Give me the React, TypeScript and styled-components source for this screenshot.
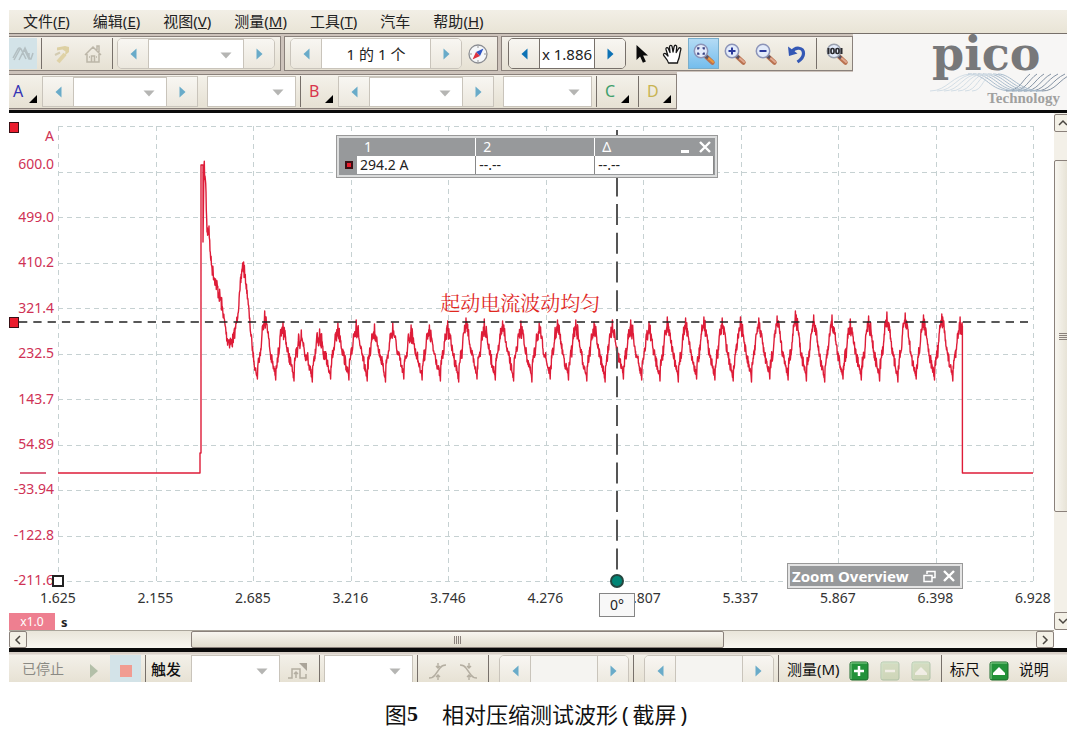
import React from "react";
import styled, { createGlobalStyle, css } from "styled-components";

const UI_FONT = `"Noto Sans", "Noto Sans CJK SC", sans-serif`;
const LINE = "#8a817b";

const GlobalStyle = createGlobalStyle`
  *, *::before, *::after { box-sizing: border-box; }
  body { margin: 0; background: #fff; font-family: ${UI_FONT}; color: #222; }
  button, input, select { font: inherit; color: inherit; }
`;

/* ---------- page ---------- */

const Page = styled.figure`
  margin: 0;
  padding: 10px 13px 0 9px;
`;

const Frame = styled.div`
  overflow: hidden;
`;

const Caption = styled.figcaption`
  display: flex;
  justify-content: center;
  padding: 16px 0 0 0;
  font-size: 22px;
  line-height: 32px;
  color: #111;
`;

const CaptionNumber = styled.b`
  font-family: "Liberation Serif", serif;
  margin-right: 24px;
`;

const Paren = styled.span`
  padding: 0 4px;
`;

/* ---------- menu ---------- */

const MenuBar = styled.nav`
  display: flex;
  gap: 23px;
  height: 24px;
  padding-left: 14px;
  background: linear-gradient(#f2efe6, #e9e4d6);
  border-bottom: 1px solid #77706a;
`;

const MenuItem = styled.button`
  border: 0;
  padding: 0 0 2px;
  background: none;
  font-size: 15px;
  line-height: 20px;
  white-space: nowrap;
`;

/* ---------- toolbars ---------- */

const Header = styled.header`
  display: flex;
  justify-content: space-between;
  background: #f7f6f5;
  border-bottom: 3px solid #0a0a0a;
`;

const Bars = styled.div`
  flex: none;
  display: flex;
  flex-direction: column;
  align-items: flex-start;
`;

const BarRow = styled.div`
  display: flex;
  gap: 3px;
  padding: 2px 0 1px;
  background: #cdc3bb;
`;

const Group = styled.div<{ $left?: number; $right?: number }>`
  display: flex;
  align-items: center;
  height: 35px;
  padding: 0 ${(p) => p.$right ?? 0}px 0 ${(p) => p.$left ?? 0}px;
  border: 1px solid ${LINE};
  background: linear-gradient(#f4f1ea, #e6e1d3);
  &:first-child { border-left: 0; }
`;

const Sep = styled.span`
  flex: none;
  width: 1px;
  height: 31px;
  margin: 0 4px;
  background: #77706a;
`;

const TOOL_WIDTH = { narrow: 28, normal: 31, wide: 35 };

const Tool = styled.button<{ $size?: keyof typeof TOOL_WIDTH; $tone?: "pale" | "active" }>`
  flex: none;
  display: flex;
  align-items: center;
  justify-content: center;
  width: ${(p) => TOOL_WIDTH[p.$size ?? "normal"]}px;
  height: 31px;
  padding: 0;
  border: 1px solid transparent;
  background: none;
  ${(p) => p.$tone === "pale" && css`background: #d3e3e8;`}
  ${(p) =>
    p.$tone === "active" &&
    css`background: linear-gradient(#b4dbf5, #74bdec); border-color: #7aaecb;`}
`;

const Channel = styled.button<{ $color: string }>`
  flex: none;
  display: flex;
  align-items: flex-end;
  justify-content: space-between;
  width: 33px;
  height: 33px;
  padding: 0 5px 5px 4px;
  border: 0;
  background: none;
  color: ${(p) => p.$color};
  font-size: 16px;
  line-height: 24px;
  svg { display: block; }
`;

const Stepper = styled.div<{ $dark?: boolean; $flat?: boolean; $indent?: boolean }>`
  flex: none;
  display: flex;
  height: 31px;
  margin-left: ${(p) => (p.$indent ? 6 : 0)}px;
  border: 1px solid ${(p) => (p.$dark ? "#77706a" : "#c9c4bb")};
  border-radius: ${(p) => (p.$flat ? 0 : 5)}px;
  overflow: hidden;
`;

const StepButton = styled.button`
  display: flex;
  align-items: center;
  justify-content: center;
  width: 30px;
  padding: 0;
  border: 0;
  background: linear-gradient(#f8f6f2, #ece8de);
`;

const Field = styled.input<{ $w: number; $dark?: boolean; $dim?: boolean }>`
  width: ${(p) => p.$w}px;
  padding: 0;
  border: solid ${(p) => (p.$dark ? "#77706a" : "#c9c4bb")};
  border-width: 0 1px;
  background: ${(p) => (p.$dim ? "#f5f4f1" : "#fff")};
  font-size: 15px;
  text-align: center;
`;

const DropBox = styled.span<{ $w: number; $gap?: boolean }>`
  flex: none;
  position: relative;
  display: block;
  width: ${(p) => p.$w}px;
  height: 31px;
  margin-left: ${(p) => (p.$gap ? 9 : 0)}px;
  svg {
    position: absolute;
    right: 12px;
    top: 13px;
    pointer-events: none;
  }
`;

const DropSelect = styled.select`
  appearance: none;
  width: 100%;
  height: 100%;
  border: 1px solid #c9c4bb;
  border-radius: 0;
  background: #fff;
`;

/* ---------- logo ---------- */

const Logo = styled.div`
  position: relative;
  width: 137px;
  height: 76px;
  color: #77787a;
`;

const LogoName = styled.div`
  font-family: "DejaVu Serif", serif;
  font-weight: 700;
  font-size: 46px;
  line-height: 40px;
  height: 40px;
  padding-left: 2px;
  white-space: nowrap;
`;

const LogoWave = styled.svg`
  display: block;
  position: absolute;
  left: 0;
  top: 39px;
`;

const LogoSub = styled.div`
  position: absolute;
  right: 7px;
  bottom: 3px;
  font-family: "Liberation Serif", serif;
  font-weight: 700;
  font-size: 15px;
  line-height: 18px;
  color: #a0a09f;
`;

/* ---------- scope view ---------- */

const Scope = styled.main`
  position: relative;
  display: grid;
  grid-template-columns: minmax(0, 1fr) 13px;
  background: #fff;
`;

const PlotGrid = styled.div`
  display: grid;
  grid-template-columns: 49px minmax(0, 1fr) 21px;
  padding-top: 13px;
  font-size: 14px;
  line-height: 20px;
`;

const YAxis = styled.div`
  display: flex;
  flex-direction: column;
  height: 464px;
  padding-right: 4px;
  text-align: right;
  color: #cf3155;
`;

const YTop = styled.div`
  display: flex;
  flex-direction: column;
  gap: 8px;
  height: 81px;
`;

const YScale = styled.div`
  flex: 1;
  display: flex;
  flex-direction: column;
  align-items: flex-end;
  justify-content: space-between;
`;

const PlotCell = styled.div`
  position: relative;
  height: 455px;
`;

const PlotSvg = styled.svg`
  display: block;
  width: 100%;
  height: 455px;
  overflow: visible;
`;

const XAxis = styled.div`
  grid-column: 2;
  display: flex;
  justify-content: space-between;
  margin: -2px -20px 5px;
  color: #333;
  span { width: 40px; text-align: center; }
`;

const UnitRow = styled.div`
  grid-column: 1 / -1;
  display: flex;
  align-items: center;
  gap: 6px;
  height: 17px;
  font-size: 13px;
`;

const ScaleTag = styled.span`
  width: 46px;
  height: 17px;
  line-height: 17px;
  font-size: 12px;
  text-align: center;
  color: #fff;
  background: #ee7f90;
`;

const Marker = styled.button<{ $y: number }>`
  position: absolute;
  left: 0;
  top: ${(p) => p.$y}px;
  width: 10px;
  height: 11px;
  padding: 0;
  border: 1px solid #3a1015;
  background: #ea1c2d;
`;

const AxisHandle = styled.button`
  position: absolute;
  left: -6px;
  bottom: -6px;
  width: 12px;
  height: 12px;
  padding: 0;
  border: 2px solid #222;
  background: #fff;
`;

const PhaseHandle = styled.button`
  position: absolute;
  left: 57.33%;
  bottom: -7px;
  width: 14px;
  height: 14px;
  margin-left: -7px;
  padding: 0;
  border: 2px solid #24463f;
  border-radius: 50%;
  background: #008575;
`;

const OverlayCell = styled.div`
  position: absolute;
  left: 49px;
  right: 34px;
  top: 13px;
`;

const PhaseLabel = styled.output`
  position: absolute;
  left: 57.33%;
  top: 467px;
  width: 36px;
  height: 24px;
  margin-left: -18px;
  border: 1px solid #858585;
  background: #f8f8f8;
  font-size: 14px;
  line-height: 22px;
  text-align: center;
`;

const Note = styled.p`
  position: absolute;
  left: 39.2%;
  top: 164px;
  margin: 0;
  font-family: "Noto Serif CJK SC", "Noto Sans CJK SC", serif;
  font-size: 20px;
  line-height: 26px;
  white-space: nowrap;
  color: #e0281f;
`;

const RulerPanel = styled.section`
  position: absolute;
  left: 278px;
  top: 9px;
  width: 382px;
  padding: 2px;
  border: 1px solid #999;
  background: #dcdddd;
`;

const RulerInner = styled.div`
  position: relative;
  padding: 0 1px 1px 0;
  background: #97999b;
`;

const RulerTable = styled.table`
  width: 100%;
  table-layout: fixed;
  border-collapse: collapse;
  font-size: 14px;
  line-height: 18px;
  text-align: left;
  th, td { padding: 0 0 0 3px; height: 18px; }
  tr > :first-child { width: 18px; padding: 0 0 0 6px; }
  th { font-weight: 400; color: #fff; border-right: 1px solid #fff; padding-left: 7px; }
  th:first-child, th:last-child { border-right: 0; }
  td { background: #fff; color: #222; border-right: 1px solid #888; }
  td:first-child { background: #97999b; border-right: 0; }
`;

const Swatch = styled.span`
  display: block;
  width: 8px;
  height: 8px;
  border: 2px solid #3a1015;
  background: #ea1c2d;
`;

const PanelButtons = styled.div<{ $inline?: boolean }>`
  display: flex;
  gap: 4px;
  ${(p) => !p.$inline && css`position: absolute; right: 2px; top: 1px;`}
`;

const PanelButton = styled.button`
  display: flex;
  align-items: center;
  justify-content: center;
  width: 16px;
  height: 16px;
  padding: 0;
  border: 0;
  background: none;
`;

const Overview = styled.section`
  position: absolute;
  right: 70px;
  bottom: -8px;
  width: 176px;
  padding: 2px;
  border: 1px solid #999;
  background: #e4e4e4;
`;

const OverviewBar = styled.div`
  display: flex;
  align-items: center;
  justify-content: space-between;
  padding: 0 3px 0 2px;
  background: #97999b;
  color: #fff;
  font-size: 15px;
  line-height: 20px;
  font-weight: 700;
`;

/* ---------- scroll bars ---------- */

const VBar = styled.div`
  display: flex;
  flex-direction: column;
  overflow: hidden;
  padding-top: 1px;
  background: #f3f0e8;
`;

const HBar = styled.div`
  display: flex;
  height: 18px;
  margin-right: 13px;
  border-top: 1px solid #aaa59b;
  background: linear-gradient(#e9e5da, #f8f6f0);
`;

const ScrollButton = styled.button`
  flex: none;
  display: flex;
  align-items: center;
  justify-content: center;
  width: 18px;
  height: 18px;
  padding: 0;
  border: 1px solid ${LINE};
  border-radius: 2px;
  background: #f3f0e6;
  ${HBar} & { height: 17px; }
`;

const Track = styled.div<{ $grow: number }>`
  flex: ${(p) => p.$grow} 1 0;
`;

const Thumb = styled.div<{ $grow: number; $vertical?: boolean }>`
  flex: ${(p) => p.$grow} 1 0;
  display: flex;
  align-items: center;
  justify-content: center;
  width: ${(p) => (p.$vertical ? "18px" : "auto")};
  border: 1px solid ${LINE};
  border-radius: 2px;
  background: linear-gradient(${(p) => (p.$vertical ? "90deg, " : "")}#f8f6f0, #e2ddce);
`;

/* ---------- status bar ---------- */

const StatusBar = styled.footer`
  display: flex;
  align-items: flex-start;
  height: 34px;
  padding-top: 3px;
  overflow: hidden;
  border-top: 4px solid #0a0a0a;
  background: linear-gradient(#d8d0c8 0, #d8d0c8 2px, #f3f0e9 3px, #e7e2d4 100%);
`;

const Status = styled.span`
  flex: none;
  padding: 0 15px 0 13px;
  font-size: 14px;
  line-height: 28px;
  color: #8b8a84;
`;

const BarLabel = styled.span<{ $trigger?: boolean }>`
  flex: none;
  padding: 0 ${(p) => (p.$trigger ? 10 : 4)}px 0 ${(p) => (p.$trigger ? 1 : 4)}px;
  font-size: 15px;
  line-height: 28px;
  font-weight: ${(p) => (p.$trigger ? 500 : 400)};
  color: #111;
`;

/* ---------- icons ---------- */

const Triangle = ({ dir, strong }: { dir: "l" | "r"; strong?: boolean }) => (
  <svg width="7" height="12" viewBox="0 0 7 12" fill={strong ? "#0d72b5" : "#69abc9"}>
    <path d={dir === "l" ? "M6.5 0.5v11L0.5 6z" : "M0.5 0.5v11L6.5 6z"} />
  </svg>
);

const DropArrow = () => (
  <svg width="12" height="7" viewBox="0 0 12 7" fill="#b5b5b3">
    <path d="M0.5 0.5h11L6 6.5z" />
  </svg>
);

const Corner = () => (
  <svg width="8" height="8" viewBox="0 0 8 8"><path d="M8 0v8H0z" fill="#000" /></svg>
);

const WaveIcon = () => (
  <svg width="22" height="20" viewBox="0 0 22 20" fill="none" stroke="#b3bfc2" strokeWidth="1.5">
    <path d="M1 14L6 5q1.500-2 3 0l5 10M2 16L8 5M7 16L13 4l5 11M12 5l5 10h2l2-6M17 9v6" />
  </svg>
);

const WandIcon = () => (
  <svg width="20" height="22" viewBox="0 0 20 22" fill="none">
    <path d="M6 19l7-8" stroke="#dfd2a6" strokeWidth="4" />
    <path d="M5 4.500l8-1.500 4 1v5l-4 3.500 0.500-4-3-2-5.500 1z" fill="#ddd0a2" />
    <path d="M3 12l5-2.500" stroke="#d3cbb2" strokeWidth="2" />
  </svg>
);

const HomeIcon = () => (
  <svg width="20" height="20" viewBox="0 0 20 20" fill="none" stroke="#bcb6a8" strokeWidth="1.5">
    <path d="M2 11l8-8 8 8M4 10v8h12v-8M14 6V2h2v6M8.5 18v-6h3v6M6 13h1M13 13h1" />
  </svg>
);

const CompassIcon = () => (
  <svg width="22" height="22" viewBox="0 0 22 22">
    <circle cx="11" cy="11" r="9" fill="#f5f7f9" stroke="#8b8d92" strokeWidth="1.3" />
    <path d="M11 3v2M11 17v2M3 11h2M17 11h2" stroke="#999" />
    <path d="M16.5 5.5L13 13 9 9z" fill="#2e55c4" />
    <path d="M5.5 16.5L9 9l4 4z" fill="#dc3340" />
  </svg>
);

const PointerIcon = () => (
  <svg width="14" height="20" viewBox="0 0 14 20">
    <path d="M1.5 1v15l3.6-3.4 2.8 6.2 3-1.4-2.8-6H13z" fill="#0b0b0b" />
  </svg>
);

const HandIcon = () => (
  <svg width="22" height="22" viewBox="0 0 22 22" fill="#fff" stroke="#161616" strokeWidth="1.300" strokeLinejoin="round">
    <path d="M6.500 20C6 17 2 13.500 1.500 12c-.4-1.500 1.500-2 2.500-1l2 2L4 6.500c-.5-2 1.700-2.500 2.400-.8L8 9.500 7.500 4c0-2 2.300-2.200 2.600-.3L11 9l1.200-5.600c.5-1.800 2.700-1.300 2.500.5L14.200 9.500l2.400-4c.9-1.500 2.800-.5 2.200 1.100-1 3-1 5.400-1.800 8.400-.5 2-1.500 3-1.500 5z" />
  </svg>
);

const Magnifier = ({ kind }: { kind: "box" | "plus" | "minus" | "full" }) => (
  <svg width="24" height="24" viewBox="0 0 24 24" fill="none">
    <path d="M14 14.500l6.500 6" stroke="#b9714f" strokeWidth="4.500" strokeLinecap="round" />
    <path d="M13 13.500l3 2.500" stroke="#5a5362" strokeWidth="3" />
    <path d="M17 16.500l4 3.500" stroke={kind === "box" ? "#ec9a3c" : "#dfa78e"} strokeWidth="2" strokeLinecap="round" />
    <circle cx="9" cy="9" r="6.700" fill="#e3ebfa" stroke={kind === "full" ? "#9aa0ad" : "#8c94b8"} strokeWidth="1.500" />
    {kind === "box" && <path d="M6 7.500V6h1.500M10.500 6H12v1.500M12 10.500V12h-1.500M7.500 12H6v-1.500" stroke="#333d80" strokeWidth="1.700" />}
    {kind === "plus" && <path d="M9 5.500v7M5.500 9h7" stroke="#2b3a9c" strokeWidth="2" />}
    {kind === "minus" && <path d="M5.500 9h7" stroke="#2b3a9c" strokeWidth="2" />}
    {kind === "full" && (
      <>
        <path d="M3.500 6v6M16.500 6v6" stroke="#2a2a2e" strokeWidth="2" />
        <rect x="6" y="6.500" width="3" height="5" rx="1.200" stroke="#2a2a2e" strokeWidth="1.700" />
        <rect x="11" y="6.500" width="3" height="5" rx="1.200" stroke="#2a2a2e" strokeWidth="1.700" />
      </>
    )}
  </svg>
);

const UndoIcon = () => (
  <svg width="20" height="20" viewBox="0 0 20 20" fill="none">
    <path d="M5 8C8 2.500 16.500 3 16.500 9.500c0 4-3 6.500-6 8.500" stroke="#3458b5" strokeWidth="3.200" />
    <path d="M1 2.500l1 9.500 8.500-2.500z" fill="#3458b5" />
  </svg>
);

const PulseIcon = () => (
  <svg width="22" height="20" viewBox="0 0 22 20" fill="none" stroke="#b4aea1" strokeWidth="1.500">
    <path d="M1 17h4V8h8v9h6v-4M9 11v6M7 13l2-2 2 2" />
    <path d="M12 2h8v8z" fill="#aaa499" stroke="none" />
  </svg>
);

const EdgeIcon = ({ falling }: { falling?: boolean }) => (
  <svg width="20" height="20" viewBox="0 0 20 20" fill="none" stroke="#b4aea1" strokeWidth="1.400">
    <path d={falling ? "M1 4q4 0 6 3l5 7q2 3 6 3" : "M1 17q4 0 6-3l5-7q2-3 6-3"} />
    <path d="M10 2v5M10 14v5M8 5l2 2 2-2M8 16l2-2 2 2" />
  </svg>
);

const GreenIcon = ({ kind, faded }: { kind: "plus" | "minus" | "up"; faded?: boolean }) => (
  <svg width="20" height="20" viewBox="0 0 20 20" opacity={faded ? 0.28 : 1}>
    <rect x="1" y="1" width="18" height="18" rx="2" fill={faded ? "#8fb56f" : "#23923a"} stroke="#1b6b2b" />
    <path d="M2 18V2h16" fill="none" stroke="#8bd08f" />
    {kind === "plus" && <path d="M10 5v10M5 10h10" stroke="#fff" strokeWidth="2.500" />}
    {kind === "minus" && <path d="M5 10h10" stroke="#fff" strokeWidth="2.500" />}
    {kind === "up" && <path d="M4 12l6-6 6 6v2H4z" fill="#fff" />}
  </svg>
);

const Chevron = ({ d }: { d: string }) => (
  <svg width="10" height="10" viewBox="0 0 10 10" fill="none" stroke="#4a4640" strokeWidth="1.500">
    <path d={d} />
  </svg>
);

const CloseIcon = () => (
  <svg width="12" height="12" viewBox="0 0 12 12" stroke="#fff" strokeWidth="2.400"><path d="M1 1l10 10M11 1L1 11" /></svg>
);

/* ---------- waveform data ---------- */

const PLOT_W = 975;
const PLOT_H = 455;
const RIPPLE_START = 207;
const RIPPLE_PITCH = 18.3;
const RIPPLE_TOPS = [
  185, 196, 204, 203, 197, 194, 198, 197, 199, 199, 195, 192, 193, 195, 195, 197, 194, 194, 196, 194,
  194, 196, 191, 192, 191, 192, 191, 192, 190, 185, 189, 189, 193, 190, 186, 187, 189, 188, 191,
];

type Pt = [number, number, number];

function buildTrace(): string {
  // Each key point carries x, y and the noise amplitude towards it.
  const keys: Pt[] = [
    [0, 347, 0], [142, 347, 0], [142, 327, 0], [143, 327, 0], [143, 39, 0], [145, 39, 0], [145, 116, 0],
    [146, 40, 0], [147, 50, 8], [148, 66, 6], [149, 106, 10], [151, 100, 10], [152, 125, 5], [154, 142, 5],
    [158, 157, 7], [161, 168, 8], [164, 180, 8], [167, 199, 5], [169, 213, 5], [171, 214, 8], [173, 217, 8],
    [175, 214, 8], [177, 205, 6], [180, 187, 4], [182, 164, 4], [184, 143, 7], [185, 137, 4], [187, 150, 9],
    [190, 174, 4], [192, 199, 4], [194, 219, 5], [196, 235, 4], [198, 246, 5],
  ];
  RIPPLE_TOPS.forEach((top, i) => {
    const x = RIPPLE_START + i * RIPPLE_PITCH;
    const low = 247 + ((i * 5) % 4);
    keys.push(
      [x - 8, low, 4], [x - 7.6, low + 6, 0], [x - 7.2, 240, 0], [x - 6, 232, 7], [x - 4, 224, 7],
      [x - 3, 208, 3], [x - 2, top + 14, 7], [x - 0.6, top + 9, 6], [x - 0.3, top, 0],
      [x, top + 10, 0], [x + 2, top + 13, 8],
    );
    if (i < RIPPLE_TOPS.length - 1) {
      keys.push([x + 3.5, top + 26, 4], [x + 5.5, 229, 5], [x + 8, 240, 6]);
    }
  });
  keys.push([904.4, 200, 5], [904.4, 347, 0], [PLOT_W, 347, 0]);

  let seed = 7;
  const rand = () => {
    seed = (seed * 16807) % 2147483647;
    return seed / 2147483647 - 0.5;
  };
  const out: string[] = [];
  keys.forEach(([x, y, n], i) => {
    if (i > 0 && n > 0) {
      const [px, py] = keys[i - 1];
      const steps = Math.max(3, Math.round((x - px) / 0.3));
      for (let s = 1; s < steps; s++) {
        const t = s / steps;
        out.push(`${(px + (x - px) * t).toFixed(1)} ${(py + (y - py) * t + rand() * 2 * n).toFixed(1)}`);
      }
    }
    out.push(`${x.toFixed(1)} ${y}`);
  });
  return "M" + out.join("L");
}

const TRACE = buildTrace();
const TENTHS = Array.from({ length: 11 }, (_, i) => i);
const Y_LABELS = ["499.0", "410.2", "321.4", "232.5", "143.7", "54.89", "-33.94", "-122.8", "-211.6"];
const X_LABELS = ["1.625", "2.155", "2.685", "3.216", "3.746", "4.276", "4.807", "5.337", "5.867", "6.398", "6.928"];
const MENUS: [string, string][] = [
  ["文件", "F"], ["编辑", "E"], ["视图", "V"], ["测量", "M"], ["工具", "T"], ["汽车", ""], ["帮助", "H"],
];

/* ---------- composed controls ---------- */

const Drop = ({ label, w, gap }: { label: string; w: number; gap?: boolean }) => (
  <DropBox $w={w} $gap={gap}>
    <DropSelect aria-label={label}><option /></DropSelect>
    <DropArrow />
  </DropBox>
);

const Steps = ({ label, children, ...rest }: {
  label: string; children: React.ReactNode; $dark?: boolean; $flat?: boolean; $indent?: boolean;
}) => (
  <Stepper {...rest}>
    <StepButton aria-label={`${label} -`}><Triangle dir="l" strong={rest.$dark} /></StepButton>
    {children}
    <StepButton aria-label={`${label} +`}><Triangle dir="r" strong={rest.$dark} /></StepButton>
  </Stepper>
);

const ChannelTool = ({ name, color }: { name: string; color: string }) => (
  <Channel $color={color}>{name}<Corner /></Channel>
);

function Plot() {
  return (
    <PlotSvg viewBox={`0 0 ${PLOT_W} ${PLOT_H}`} preserveAspectRatio="none" fill="none">
      <g stroke="#c6d1d2" strokeDasharray="5 4">
        {TENTHS.map((i) => (
          <React.Fragment key={i}>
            <path d={`M0 ${Math.round(i * 45.5) + 0.5}H${PLOT_W}`} />
            <path d={`M${Math.round(i * 97.5) + 0.5} 0V${PLOT_H}`} />
          </React.Fragment>
        ))}
      </g>
      <path d="M-38 347H-12" stroke="#cf3155" strokeWidth="1.500" />
      <path d={TRACE} stroke="#de1c38" strokeWidth="1.400" strokeLinejoin="round" />
      <path d="M-39 196H970" stroke="#222" strokeWidth="1.600" strokeDasharray="8.300 6" />
      <path d="M559 4V449" stroke="#555" strokeWidth="2" strokeDasharray="21 7.700" strokeDashoffset="12" />
    </PlotSvg>
  );
}

export default function App() {
  return (
    <Page>
      <GlobalStyle />
      <Frame>
        <MenuBar>
          {MENUS.map(([text, key]) => (
            <MenuItem key={text}>{text}{key && <>(<u>{key}</u>)</>}</MenuItem>
          ))}
        </MenuBar>

        <Header>
          <Bars>
            <BarRow>
              <Group $right={5}>
                <Tool $size="narrow" $tone="pale" aria-label="示波器"><WaveIcon /></Tool>
                <Sep />
                <Tool aria-label="自动设置"><WandIcon /></Tool>
                <Tool aria-label="主页"><HomeIcon /></Tool>
                <Sep />
                <Steps label="时基"><Drop label="时基" w={96} /></Steps>
              </Group>
              <Group $left={5} $right={4}>
                <Steps label="缓冲区">
                  <Field $w={110} aria-label="缓冲区" defaultValue="1 的 1 个" />
                </Steps>
                <Tool aria-label="导航"><CompassIcon /></Tool>
              </Group>
              <Group $left={6}>
                <Steps label="缩放" $dark>
                  <Field $w={56} $dark aria-label="缩放" defaultValue="x 1.886" />
                </Steps>
                <Tool aria-label="选择"><PointerIcon /></Tool>
                <Tool aria-label="拖动"><HandIcon /></Tool>
                <Tool $tone="active" aria-label="框选缩放"><Magnifier kind="box" /></Tool>
                <Tool aria-label="放大"><Magnifier kind="plus" /></Tool>
                <Tool aria-label="缩小"><Magnifier kind="minus" /></Tool>
                <Tool aria-label="撤消"><UndoIcon /></Tool>
                <Sep />
                <Tool aria-label="完整视图"><Magnifier kind="full" /></Tool>
              </Group>
            </BarRow>
            <BarRow>
              <Group>
                <ChannelTool name="A" color="#3434b4" />
                <Steps label="A" $flat><Drop label="A 量程" w={94} /></Steps>
                <Drop label="A 耦合" w={89} gap />
                <Sep />
                <ChannelTool name="B" color="#d8364c" />
                <Steps label="B" $flat><Drop label="B 量程" w={94} /></Steps>
                <Drop label="B 耦合" w={89} gap />
                <Sep />
                <ChannelTool name="C" color="#3f9f6c" />
                <Sep />
                <ChannelTool name="D" color="#c8b452" />
              </Group>
            </BarRow>
          </Bars>
          <Logo>
            <LogoName>pico</LogoName>
            <LogoWave width="137" height="20" viewBox="0 0 137 20" fill="none" strokeWidth="1">
              {[0, 1, 2, 3, 4, 5, 6].map((i) => (
                <React.Fragment key={i}>
                  <path d={`M${i * 7} 18C${18 + i * 6} 18 ${22 + i * 5} 1 ${42 + i * 4} 1`} stroke="#d3dee6" />
                  <path d={`M${38 + i * 5} 1C${58 + i * 4} 1 ${58 + i * 5} 18 ${82 + i * 5} 18`} stroke="#a9bccd" />
                  <path d={`M${76 + i * 6} 18C${90 + i * 6} 18 ${92 + i * 6} 7 ${100 + i * 7} 1`} stroke="#8593a4" />
                </React.Fragment>
              ))}
            </LogoWave>
            <LogoSub>Technology</LogoSub>
          </Logo>
        </Header>

        <Scope>
          <PlotGrid>
            <YAxis>
              <YTop><span>A</span><span>600.0</span></YTop>
              <YScale>{Y_LABELS.map((t) => <span key={t}>{t}</span>)}</YScale>
            </YAxis>
            <PlotCell>
              <Plot />
              <Note>起动电流波动均匀</Note>
              <AxisHandle aria-label="时间标尺" />
              <PhaseHandle aria-label="相位标尺" />
              <RulerPanel>
                <RulerInner>
                  <RulerTable>
                    <thead><tr><th aria-label="通道" /><th>1</th><th>2</th><th>Δ</th></tr></thead>
                    <tbody><tr><td><Swatch /></td><td>294.2 A</td><td>--.--</td><td>--.--</td></tr></tbody>
                  </RulerTable>
                  <PanelButtons>
                    <PanelButton aria-label="最小化">
                      <svg width="10" height="12" viewBox="0 0 10 12"><path d="M1 9h8v3H1z" fill="#fff" /></svg>
                    </PanelButton>
                    <PanelButton aria-label="关闭"><CloseIcon /></PanelButton>
                  </PanelButtons>
                </RulerInner>
              </RulerPanel>
              <Overview>
                <OverviewBar>
                  Zoom Overview
                  <PanelButtons $inline>
                    <PanelButton aria-label="还原">
                      <svg width="13" height="13" viewBox="0 0 13 13" fill="none" stroke="#fff" strokeWidth="1.500">
                        <path d="M4 4V1.500h8v6H9.500M1 5.500h8v6H1z" />
                      </svg>
                    </PanelButton>
                    <PanelButton aria-label="关闭概览"><CloseIcon /></PanelButton>
                  </PanelButtons>
                </OverviewBar>
              </Overview>
            </PlotCell>
            <XAxis>{X_LABELS.map((t) => <span key={t}>{t}</span>)}</XAxis>
            <UnitRow><ScaleTag>x1.0</ScaleTag><b>s</b></UnitRow>
          </PlotGrid>
          <VBar>
            <ScrollButton aria-label="向上"><Chevron d="M1 7l4-4 4 4" /></ScrollButton>
            <Track $grow={28} />
            <Thumb $grow={351} $vertical>
              <svg width="8" height="7" viewBox="0 0 8 7" stroke="#8a817b"><path d="M0 .5h8M0 2.500h8M0 4.500h8M0 6.500h8" /></svg>
            </Thumb>
            <Track $grow={100} />
            <ScrollButton aria-label="向下"><Chevron d="M1 3l4 4 4-4" /></ScrollButton>
          </VBar>
          <Marker $y={9} aria-label="通道标尺 2" />
          <Marker $y={204} aria-label="通道标尺 1" />
          <OverlayCell>
            <PhaseLabel>0°</PhaseLabel>
          </OverlayCell>
        </Scope>

        <HBar>
          <ScrollButton aria-label="向左"><Chevron d="M7 1L3 5l4 4" /></ScrollButton>
          <Track $grow={164} />
          <Thumb $grow={532}>
            <svg width="7" height="8" viewBox="0 0 7 8" stroke="#8a817b"><path d="M.5 0v8M2.500 0v8M4.500 0v8M6.500 0v8" /></svg>
          </Thumb>
          <Track $grow={313} />
          <ScrollButton aria-label="向右"><Chevron d="M3 1l4 4-4 4" /></ScrollButton>
        </HBar>

        <StatusBar>
          <Status>已停止</Status>
          <Tool aria-label="开始">
            <svg width="9" height="14" viewBox="0 0 9 14"><path d="M0 0l8 7-8 7z" fill="#b3bfa8" /></svg>
          </Tool>
          <Tool $tone="pale" aria-label="停止">
            <svg width="12" height="12" viewBox="0 0 12 12"><path d="M0 0h12v12H0z" fill="#f19c92" /></svg>
          </Tool>
          <Sep />
          <BarLabel $trigger>触发</BarLabel>
          <Drop label="触发模式" w={89} />
          <Tool $size="wide" aria-label="高级触发"><PulseIcon /></Tool>
          <Sep />
          <Drop label="触发通道" w={89} />
          <Sep />
          <Tool aria-label="上升沿"><EdgeIcon /></Tool>
          <Tool aria-label="下降沿"><EdgeIcon falling /></Tool>
          <Sep />
          <Steps label="阈值" $indent><Field $w={68} $dim aria-label="阈值" /></Steps>
          <Sep />
          <Steps label="预触发" $indent><Field $w={68} $dim aria-label="预触发" /></Steps>
          <Sep />
          <BarLabel>测量(M)</BarLabel>
          <Tool aria-label="添加测量"><GreenIcon kind="plus" /></Tool>
          <Tool aria-label="删除测量"><GreenIcon kind="minus" faded /></Tool>
          <Tool aria-label="编辑测量"><GreenIcon kind="up" faded /></Tool>
          <Sep />
          <BarLabel>标尺</BarLabel>
          <Tool aria-label="标尺图例"><GreenIcon kind="up" /></Tool>
          <BarLabel>说明</BarLabel>
        </StatusBar>
      </Frame>

      <Caption>
        图<CaptionNumber>5</CaptionNumber>相对压缩测试波形<Paren>(</Paren>截屏<Paren>)</Paren>
      </Caption>
    </Page>
  );
}
